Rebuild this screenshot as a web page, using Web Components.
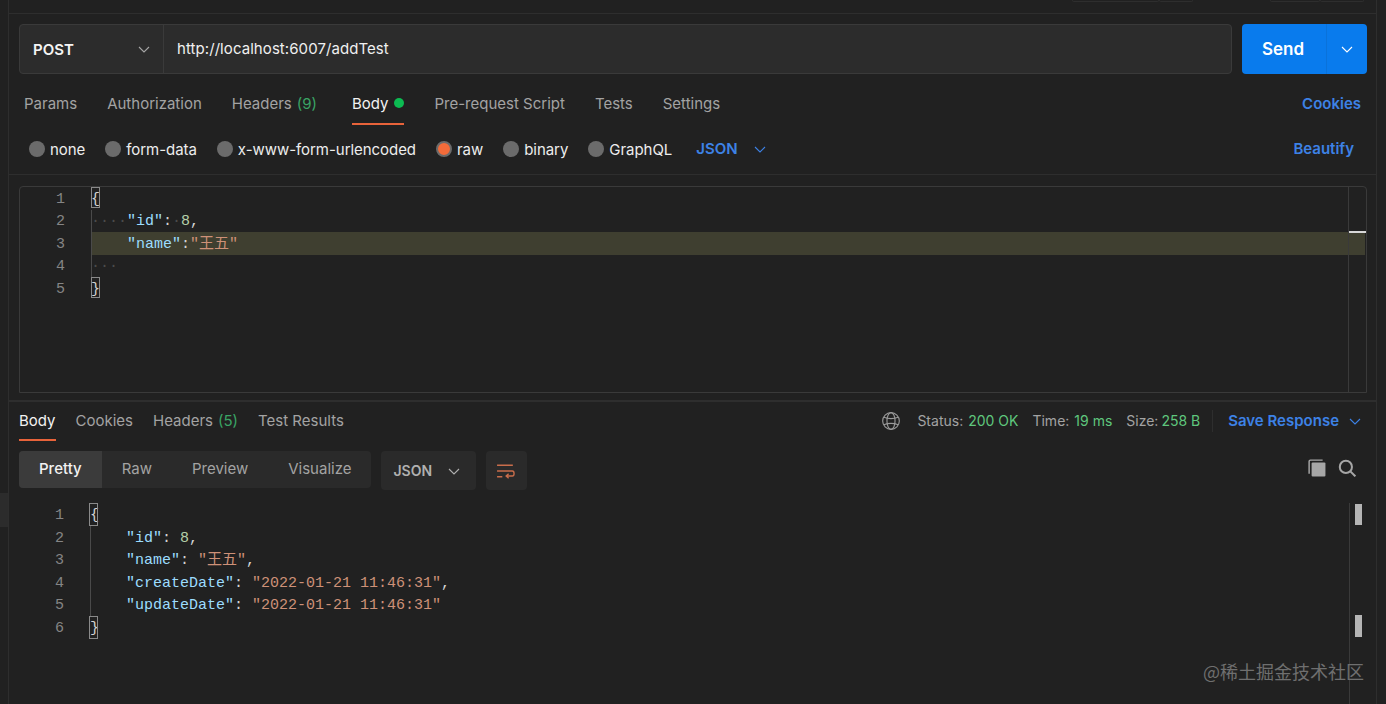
<!DOCTYPE html>
<html lang="en">
<head>
<meta charset="utf-8">
<title>POST addTest</title>
<style>
    html, body { margin: 0; height: 100%; background: #212121; overflow: hidden; }
    body { font: 15px Inter, "Liberation Sans", sans-serif; color: #a6a6a6; }
    .k { color: #9cdcfe; }
    .n { color: #b5cea8; }
    .s { color: #ce9178; }
    .p { color: #d4d4d4; }
    .w { color: #4b4b4b; }
</style>
</head>
<body>
<pm-app></pm-app>

<script>
const ICONS = {
    chevron: '<path d="M3 6l5 5 5-5" fill="none" stroke="currentColor" stroke-width="1.1"/>',
    globe: '<g fill="none" stroke="currentColor" stroke-width="1"><circle cx="8" cy="8" r="7.4"/><ellipse cx="8" cy="8" rx="3.6" ry="7.4"/><path d="M1.6 4.6c3.6 1.4 9.2 1.4 12.8 0M1.6 11.4c3.6-1.4 9.2-1.4 12.8 0"/></g>',
    copy: '<path d="M1 13V2.2c0-.7.5-1.2 1.2-1.2H13" fill="none" stroke="currentColor" stroke-width="1.3"/><rect x="3.2" y="3" width="12.3" height="12.6" rx="1" fill="currentColor"/>',
    search: '<circle cx="7" cy="7" r="5.4" fill="none" stroke="currentColor" stroke-width="1.8"/><path d="M11 11l4.4 4.4" fill="none" stroke="currentColor" stroke-width="1.8"/>',
    wrap: '<path d="M1 2.5h15M1 8h14.5c2.2 0 2.2 4.8 0 4.8H10M12 10.6l-2.4 2.2 2.4 2.2M1 13.5h5" fill="none" stroke="currentColor" stroke-width="1.3"/>'
};

class PmIcon extends HTMLElement {
    connectedCallback() {
        const size = this.getAttribute('size') || 16;
        this.attachShadow({ mode: 'open' }).innerHTML = `
            <style>
                :host { display: inline-flex; flex: none; }
                svg { display: block; }
            </style>
            <svg width="${size}" height="${size}" viewBox="${this.getAttribute('box') || '0 0 16 16'}">${ICONS[this.getAttribute('name')]}</svg>
        `;
    }
}
customElements.define('pm-icon', PmIcon);

class PmTab extends HTMLElement {
    constructor() {
        super();
        this.attachShadow({ mode: 'open' }).innerHTML = `
            <style>
                :host {
                    display: flex;
                    align-items: center;
                    height: 100%;
                    box-sizing: border-box;
                    border-bottom: 2px solid transparent;
                    color: #a3a3a3;
                    font-size: 15px;
                    white-space: nowrap;
                }
                :host([active]) { color: #f2f2f2; border-bottom-color: #e8633a; }
                .count { color: #3aa465; margin-left: 5px; }
                .dot { width: 10px; height: 10px; border-radius: 50%; background: #0cbb52; margin-left: 6px; }
            </style>
            <slot></slot>
            ${this.hasAttribute('count') ? `<span class="count">(${this.getAttribute('count')})</span>` : ''}
            ${this.hasAttribute('dot') ? '<span class="dot"></span>' : ''}
        `;
    }
}
customElements.define('pm-tab', PmTab);

class PmRadio extends HTMLElement {
    constructor() {
        super();
        this.attachShadow({ mode: 'open' }).innerHTML = `
            <style>
                :host {
                    display: flex;
                    align-items: center;
                    gap: 5px;
                    color: #ededed;
                    font-size: 15px;
                    letter-spacing: -0.05px;
                    white-space: nowrap;
                }
                i { width: 16px; height: 16px; border-radius: 50%; background: #6b6b6b; box-sizing: border-box; margin-top: -2px; }
                :host([on]) i { background: #f26b3a; border: 2px solid #6b6b6b; }
            </style>
            <i></i><slot></slot>
        `;
    }
}
customElements.define('pm-radio', PmRadio);

class RequestBar extends HTMLElement {
    constructor() {
        super();
        this.attachShadow({ mode: 'open' }).innerHTML = `
            <style>
                :host { display: flex; gap: 10px; padding: 10px 0 0 10px; height: 50px; margin-right: 9px; }
                .field {
                    flex: 1;
                    display: flex;
                    background: #2c2c2c;
                    border: 1px solid #3a3a3a;
                    border-radius: 4px;
                    box-sizing: border-box;
                    color: #f0f0f0;
                }
                .method {
                    width: 144px;
                    box-sizing: border-box;
                    display: flex;
                    align-items: center;
                    justify-content: space-between;
                    padding: 0 11px 0 13px;
                    border-right: 1px solid #3a3a3a;
                    font-weight: 600;
                    color: #f5f5f5;
                }
                .method pm-icon { color: #a6a6a6; }
                .url { display: flex; align-items: center; padding-left: 13px; padding-bottom: 2px; letter-spacing: 0.07px; }
                .send {
                    width: 125px;
                    display: flex;
                    background: #097bed;
                    border-radius: 4px;
                    color: #fff;
                }
                .send b {
                    width: 85px;
                    box-sizing: border-box;
                    padding: 0 0 1px 20px;
                    display: flex;
                    align-items: center;
                    font-size: 17px;
                    font-weight: 600;
                    border-right: 1px solid #0a72da;
                }
                .send span { flex: 1; display: flex; align-items: center; justify-content: center; }
            </style>
            <div class="field">
                <div class="method">POST <pm-icon name="chevron"></pm-icon></div>
                <div class="url">http://localhost:6007/addTest</div>
            </div>
            <div class="send"><b>Send</b><span><pm-icon name="chevron"></pm-icon></span></div>
        `;
    }
}
customElements.define('request-bar', RequestBar);

class RequestTabs extends HTMLElement {
    constructor() {
        super();
        this.attachShadow({ mode: 'open' }).innerHTML = `
            <style>
                :host { display: flex; gap: 30px; height: 51px; padding: 0 15px; box-sizing: border-box; align-items: stretch; }
                pm-tab { padding-top: 9px; }
                a { margin-left: auto; align-self: center; margin-top: 7px; color: #3d82e6; font-weight: 600; }
            </style>
            <pm-tab>Params</pm-tab>
            <pm-tab>Authorization</pm-tab>
            <pm-tab count="9">Headers</pm-tab>
            <pm-tab active dot style="margin-left:5px">Body</pm-tab>
            <pm-tab>Pre-request Script</pm-tab>
            <pm-tab>Tests</pm-tab>
            <pm-tab>Settings</pm-tab>
            <a>Cookies</a>
        `;
    }
}
customElements.define('request-tabs', RequestTabs);

class BodyOptions extends HTMLElement {
    constructor() {
        super();
        this.attachShadow({ mode: 'open' }).innerHTML = `
            <style>
                :host {
                    display: flex;
                    align-items: center;
                    gap: 20px;
                    height: 49px;
                    padding: 0 22px 0 20px;
                    border-bottom: 1px solid #2e2e2e;
                }
                .lang { display: flex; align-items: center; gap: 14px; color: #3d82e6; font-weight: 600; margin-left: 4px; margin-top: -2px; }
                a { margin-left: auto; color: #3d82e6; font-weight: 600; margin-top: -2px; }
            </style>
            <pm-radio>none</pm-radio>
            <pm-radio>form-data</pm-radio>
            <pm-radio>x-www-form-urlencoded</pm-radio>
            <pm-radio on>raw</pm-radio>
            <pm-radio>binary</pm-radio>
            <pm-radio>GraphQL</pm-radio>
            <div class="lang">JSON <pm-icon name="chevron"></pm-icon></div>
            <a>Beautify</a>
        `;
    }
}
customElements.define('body-options', BodyOptions);

class CodeLine extends HTMLElement {
    constructor() {
        super();
        this.attachShadow({ mode: 'open' }).innerHTML = `
            <style>
                :host {
                    display: flex;
                    height: 22.5px;
                    font: 15px/22.5px "Liberation Mono", "Noto Sans CJK SC", monospace;
                    white-space: pre;
                    color: #d4d4d4;
                }
                .num { width: 45px; flex: none; text-align: right; color: #858585; padding-top: var(--text-pad, 0); box-sizing: border-box; height: 22.5px; }
                .code { flex: 1; margin-left: 26px; position: relative; }
                .text { display: block; padding-top: var(--text-pad, 0); height: 22.5px; box-sizing: border-box; }
                :host([current]) .code { background: #3f3f30; margin-right: -17px; }
                .guide { position: absolute; left: 0; top: 0; bottom: 0; width: 1px; background: #4a4a4a; }
                :host([brace]) .guide { display: none; }
                .brace {
                    display: none;
                    position: absolute;
                    left: var(--brace-left, 0);
                    top: 0;
                    width: 9px;
                    height: var(--brace-height, 21px);
                    border: 1px solid #8a8a8a;
                    box-sizing: border-box;
                }
                :host([brace]) .brace { display: block; }
            </style>
            <span class="num"></span>
            <span class="code"><i class="guide"></i><i class="brace"></i><span class="text"><slot></slot></span></span>
        `;
        this.shadowRoot.querySelector('.num').textContent = this.getAttribute('n');
    }
}
customElements.define('code-line', CodeLine);

class CodeEditor extends HTMLElement {
    constructor() {
        super();
        this.attachShadow({ mode: 'open' }).innerHTML = `
            <style>
                :host { display: flex; box-sizing: border-box; position: relative; }
                .lines { flex: 1; min-width: 0; }
                .bar { width: 17px; flex: none; border-left: 1px solid #3a3a3a; position: relative; }
            </style>
            <div class="lines"><slot></slot></div>
            <div class="bar"><slot name="bar"></slot></div>
        `;
    }
}
customElements.define('code-editor', CodeEditor);

class ResponseHead extends HTMLElement {
    constructor() {
        super();
        this.attachShadow({ mode: 'open' }).innerHTML = `
            <style>
                :host { display: flex; height: 39px; padding: 0 13px 0 10px; box-sizing: border-box; align-items: stretch; }
                .tabs { display: flex; gap: 20px; }
                .meta { margin-left: auto; display: flex; align-items: center; color: #a3a3a3; white-space: nowrap; padding-bottom: 2px; font-size: 14px; }
                .meta pm-icon { margin-right: 17px; color: #9a9a9a; }
                .meta span { margin-right: 14px; }
                .meta em { font-style: normal; color: #5fc77d; margin-left: 5px; }
                .save {
                    display: flex;
                    align-items: center;
                    gap: 8px;
                    padding-left: 15px;
                    border-left: 1px solid #2e2e2e;
                    height: 22px;
                    color: #3d82e6;
                    font-size: 15px;
                    font-weight: 600;
                }
            </style>
            <div class="tabs">
                <pm-tab active>Body</pm-tab>
                <pm-tab>Cookies</pm-tab>
                <pm-tab count="5">Headers</pm-tab>
                <pm-tab>Test Results</pm-tab>
            </div>
            <div class="meta">
                <pm-icon name="globe" size="18"></pm-icon>
                <span>Status:<em>200 OK</em></span>
                <span>Time:<em>19 ms</em></span>
                <span style="margin-right:12px">Size:<em style="margin-left:3px">258 B</em></span>
                <div class="save">Save Response <pm-icon name="chevron" style="margin:0;color:#3d82e6"></pm-icon></div>
            </div>
        `;
    }
}
customElements.define('response-head', ResponseHead);

class ResponseTools extends HTMLElement {
    constructor() {
        super();
        this.attachShadow({ mode: 'open' }).innerHTML = `
            <style>
                :host { display: flex; align-items: flex-start; margin-top: 10px; padding: 0 20px 0 10px; height: 44px; }
                .views { display: flex; height: 37px; background: #2a2a2a; border-radius: 4px; overflow: hidden; }
                .views span { display: flex; align-items: center; padding: 0 20px 2px; color: #a3a3a3; }
                .views span:last-child { padding-right: 19px; }
                .views .on { background: #3b3b3b; color: #f2f2f2; font-weight: 500; }
                .lang {
                    margin-left: 10px;
                    display: flex;
                    align-items: center;
                    justify-content: space-between;
                    box-sizing: border-box;
                    width: 95px;
                    height: 39px;
                    padding: 0 14px 0 13px;
                    background: #2a2a2a;
                    border-radius: 4px;
                    color: #b0b0b0;
                    font-size: 14px;
                    font-weight: 600;
                }
                .wrap {
                    margin-left: 10px;
                    width: 41px;
                    height: 39px;
                    display: flex;
                    align-items: center;
                    justify-content: center;
                    background: #2a2a2a;
                    border-radius: 4px;
                    color: #c96d4b;
                }
                .right { margin-left: auto; display: flex; gap: 12px; padding-top: 8px; color: #a6a6a6; }
            </style>
            <div class="views">
                <span class="on">Pretty</span><span>Raw</span><span>Preview</span><span>Visualize</span>
            </div>
            <div class="lang">JSON <pm-icon name="chevron"></pm-icon></div>
            <div class="wrap"><pm-icon name="wrap" size="20" box="0 0 19 16"></pm-icon></div>
            <div class="right">
                <pm-icon name="copy" size="18"></pm-icon>
                <pm-icon name="search" size="18"></pm-icon>
            </div>
        `;
    }
}
customElements.define('response-tools', ResponseTools);

class PmApp extends HTMLElement {
    constructor() {
        super();
        this.attachShadow({ mode: 'open' }).innerHTML = `
            <style>
                :host { display: flex; height: 704px; overflow: hidden; position: relative; background: #212121; }
                .rail { width: 8px; flex: none; border-right: 1px solid #2e2e2e; position: relative; }
                .rail i { display: block; height: 34px; margin-top: 493px; background: #2c2c2c; }
                .main { width: 1367px; flex: none; border-right: 1px solid #2e2e2e; display: flex; flex-direction: column; }
                .top { height: 13px; flex: none; border-bottom: 1px solid #2e2e2e; display: flex; box-sizing: content-box; }
                .top i { height: 1px; border: 1px solid #2e2e2e; border-top: 0; border-radius: 0 0 4px 4px; }
                .split { height: 2px; flex: none; margin-top: 7px; background: #2e2e2e; }
                .mark {
                    position: absolute;
                    right: 22px;
                    top: 659px;
                    font: 18px/24px "Noto Sans CJK SC", Inter, sans-serif;
                    color: #6f6f6f;
                }
            </style>
            <div class="rail"><i></i></div>
            <div class="main">
                <div class="top">
                    <i style="margin-left:1063px;width:85px"></i><i style="width:32px"></i>
                    <i style="margin-left:77px;width:48px"></i><i style="width:42px"></i>
                </div>
                <request-bar></request-bar>
                <request-tabs></request-tabs>
                <body-options></body-options>
                <slot name="request"></slot>
                <div class="split"></div>
                <response-head></response-head>
                <response-tools></response-tools>
                <slot name="response"></slot>
            </div>
            <div class="mark">@稀土掘金技术社区</div>
        `;
    }
    connectedCallback() {
        const reqBar = '<div slot="bar" style="height:2px;margin-top:44px;background:#d8d8d8;position:relative"></div>';
        const resBar = '<div slot="bar" style="width:7px;height:21px;margin:1px 0 0 5px;background:#b5b5b5"></div>'
            + '<div slot="bar" style="width:7px;height:22px;margin:90px 0 0 5px;background:#b5b5b5"></div>';
        this.innerHTML = `
            <code-editor slot="request" style="display:flex;flex:none;margin:11px 9px 0 10px;height:207px;border:1px solid #3a3a3a;border-radius:4px 4px 0 0;--text-pad:1.5px">
                <code-line n="1" brace><span class="p">{</span></code-line>
                <code-line n="2"><span class="w">····</span><span class="k">"id"</span><span class="p">:</span><span class="w">·</span><span class="n">8</span><span class="p">,</span></code-line>
                <code-line n="3" current><span class="w">    </span><span class="k">"name"</span><span class="p">:</span><span class="s">"王五"</span></code-line>
                <code-line n="4"><span class="w">···</span></code-line>
                <code-line n="5" brace><span class="p">}</span></code-line>
                ${reqBar}
            </code-editor>
            <code-editor slot="response" style="display:flex;flex:none;margin:0 9px 0 10px;height:209px;padding-top:8px;--brace-left:-1px;--brace-height:23px;--text-pad:2px">
                <code-line n="1" brace><span class="p">{</span></code-line>
                <code-line n="2"><span class="p">    </span><span class="k">"id"</span><span class="p">: </span><span class="n">8</span><span class="p">,</span></code-line>
                <code-line n="3"><span class="p">    </span><span class="k">"name"</span><span class="p">: </span><span class="s">"王五"</span><span class="p">,</span></code-line>
                <code-line n="4"><span class="p">    </span><span class="k">"createDate"</span><span class="p">: </span><span class="s">"2022-01-21 11:46:31"</span><span class="p">,</span></code-line>
                <code-line n="5"><span class="p">    </span><span class="k">"updateDate"</span><span class="p">: </span><span class="s">"2022-01-21 11:46:31"</span></code-line>
                <code-line n="6" brace><span class="p">}</span></code-line>
                ${resBar}
            </code-editor>
        `;
    }
}
customElements.define('pm-app', PmApp);
</script>
</body>
</html>
